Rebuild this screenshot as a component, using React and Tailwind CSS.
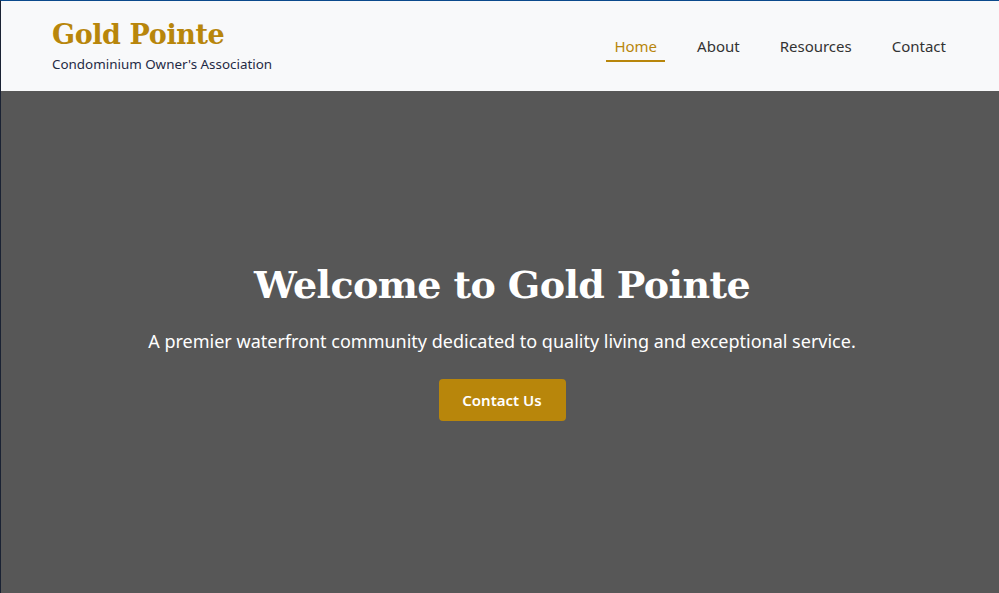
import React from "react";

const navLinks = ["Home", "About", "Resources", "Contact"];

function Header() {
  return (
    <header className="h-[90px] bg-[#f8f9fa] flex items-center justify-between pl-[51px] pr-[45px]">
      <div className="flex flex-col">
        <h1 className="font-['DejaVu_Serif',serif] font-bold text-[27px] leading-none text-[#b8860b] tracking-[-0.4px]">
          Gold Pointe
        </h1>
        <p className="mt-[10px] text-[13.4px] leading-none text-[#1f2a44] font-['Noto_Sans',sans-serif]">
          Condominium Owner's Association
        </p>
      </div>
      <nav className="-mt-[2px] flex items-center gap-6 font-['Noto_Sans',sans-serif] text-[15px]">
        {navLinks.map((link, i) => (
          <a
            key={link}
            href="#"
            className={
              i === 0
                ? "px-2 pt-[7px] pb-[2px] text-[#b8860b] border-b-2 border-[#b8860b]"
                : "px-2 pt-[7px] pb-[2px] text-[#333] border-b-2 border-transparent"
            }
          >
            {link}
          </a>
        ))}
      </nav>
    </header>
  );
}

function Hero() {
  return (
    <section className="h-[502px] pt-[3px] pl-[4px] bg-[#575757] flex flex-col items-center justify-center text-center text-white">
      <h2 className="font-['DejaVu_Serif',serif] font-bold text-[38px] leading-none tracking-[-0.6px]">
        Welcome to Gold Pointe
      </h2>
      <p className="mt-[24px] text-[18px] font-['Noto_Sans',sans-serif]">
        A premier waterfront community dedicated to quality living and exceptional service.
      </p>
      <a
        href="#"
        className="mt-[24px] w-[127px] h-[42px] flex items-center justify-center bg-[#b8860b] rounded text-[15px] font-semibold font-['Noto_Sans',sans-serif]"
      >
        Contact Us
      </a>
    </section>
  );
}

export default function App() {
  return (
    <div className="min-h-screen border-t border-t-[#0b4a8c] border-l border-l-[#1a2233]">
      <Header />
      <Hero />
    </div>
  );
}
